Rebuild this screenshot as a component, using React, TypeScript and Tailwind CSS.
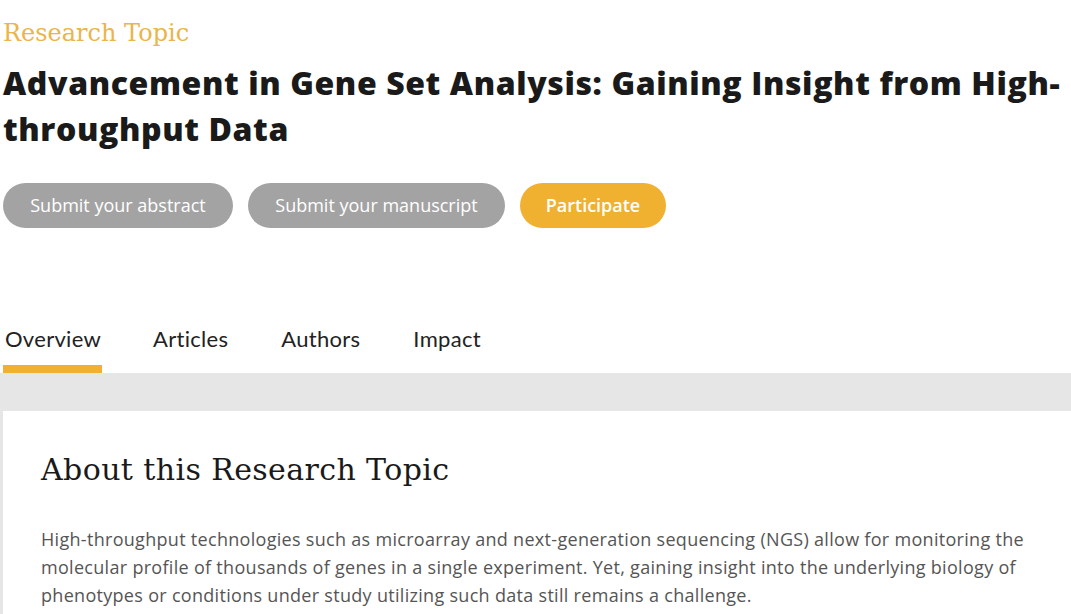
export default function App() {
  return (
    <div className="w-[1071px] h-[614px] overflow-hidden bg-white">
      <div className="pl-[3px] pt-[16px]">
        <div className="text-[24px] leading-[34px] text-[#eab54a] font-['DejaVu_Serif',serif] font-light">Research Topic</div>
        <h1 className="mt-[10px] w-[1068px] text-[32px] leading-[46px] font-extrabold text-[#1a1a1a] font-['Open_Sans',sans-serif] tracking-[0.6px]">
          Advancement in Gene Set Analysis: Gaining Insight from High-throughput Data
        </h1>
        <div className="mt-[31px] flex gap-[15px] font-['Open_Sans',sans-serif] text-[18px]">
          <button className="h-[45px] w-[230px] rounded-full bg-[#a3a3a3] text-white">Submit your abstract</button>
          <button className="h-[45px] w-[257px] rounded-full bg-[#a3a3a3] text-white">Submit your manuscript</button>
          <button className="h-[45px] w-[146px] rounded-full bg-[#f0b030] text-white font-semibold">Participate</button>
        </div>
        <div className="mt-[98px] flex font-['Lato',sans-serif] text-[22px] text-[#222] tracking-[0.3px]">
          <div className="w-[99px] flex flex-col">
            <div className="pl-[2px] h-[39px] leading-[26px]">Overview</div>
            <div className="h-[8px] bg-[#f0b030]" />
          </div>
          <div className="ml-[51px] leading-[26px]">Articles</div>
          <div className="ml-[53px] leading-[26px]">Authors</div>
          <div className="ml-[53px] leading-[26px]">Impact</div>
        </div>
      </div>
      <div className="bg-[#e6e6e6] pt-[38px] pl-[3px]">
        <div className="bg-white pl-[38px] pt-[40px] pb-[40px]">
          <h2 className="text-[30px] leading-[38px] text-[#1a1a1a] font-['DejaVu_Serif',serif] font-light tracking-[0.4px]">About this Research Topic</h2>
          <p className="mt-[36px] text-[18px] leading-[28px] text-[#555] font-['Open_Sans',sans-serif] tracking-[0.3px] w-[1000px]">
            High-throughput technologies such as microarray and next-generation sequencing (NGS) allow for monitoring the molecular profile of thousands of genes in a single experiment. Yet, gaining insight into the underlying biology of phenotypes or conditions under study utilizing such data still remains a challenge.
          </p>
        </div>
      </div>
    </div>
  );
}
